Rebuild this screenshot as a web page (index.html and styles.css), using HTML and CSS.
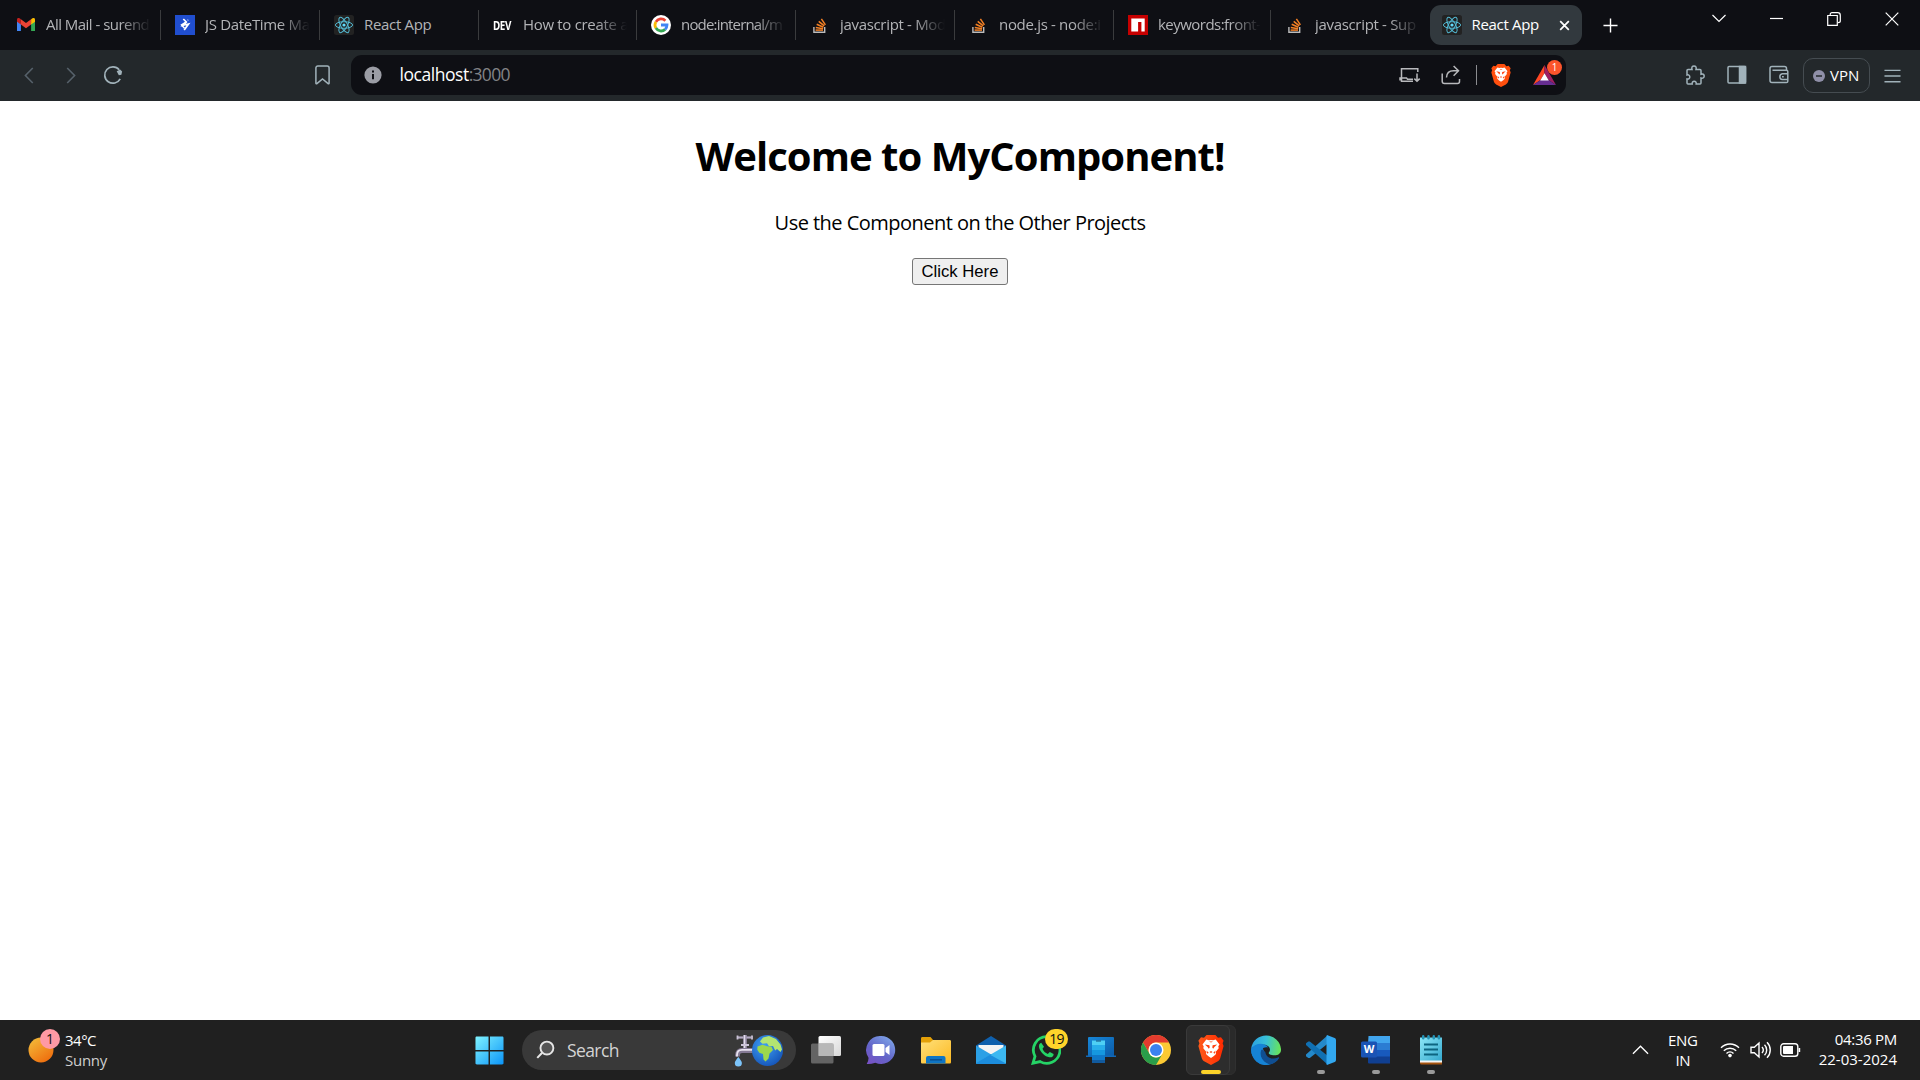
FILE: index.html
```html
<!DOCTYPE html>
<html lang="en">
<head>
<meta charset="utf-8">
<title>React App</title>
<link rel="stylesheet" href="styles.css">
</head>
<body>
<svg class="defs" aria-hidden="true">
  <defs>
    <linearGradient id="g-sun" x1="0.1" y1="0" x2="0.8" y2="1"><stop offset="0" stop-color="#f3bd3a"/><stop offset="1" stop-color="#ee6a0c"/></linearGradient>
    <linearGradient id="g-win" x1="0" y1="0" x2="1" y2="1"><stop offset="0" stop-color="#7ff3ff"/><stop offset="1" stop-color="#0b94f8"/></linearGradient>
    <linearGradient id="g-chat" x1="0" y1="1" x2="0.7" y2="0"><stop offset="0" stop-color="#7b4fc4"/><stop offset="0.5" stop-color="#6264c8"/><stop offset="1" stop-color="#7b9fe6"/></linearGradient>
    <linearGradient id="g-folder" x1="0" y1="0" x2="1" y2="1"><stop offset="0" stop-color="#ffe07a"/><stop offset="1" stop-color="#fcb922"/></linearGradient>
    <linearGradient id="g-edge" x1="0" y1="0.2" x2="1" y2="0.3"><stop offset="0" stop-color="#2b9fe0"/><stop offset="0.5" stop-color="#38c0d8"/><stop offset="1" stop-color="#67e35c"/></linearGradient>
    <linearGradient id="g-edge2" x1="0" y1="0" x2="0.8" y2="1"><stop offset="0" stop-color="#1b8ddd"/><stop offset="1" stop-color="#0c59a4"/></linearGradient>
    <linearGradient id="g-brave" x1="0" y1="0" x2="1" y2="0"><stop offset="0" stop-color="#ff5a1a"/><stop offset="1" stop-color="#ff2a00"/></linearGradient>
    <linearGradient id="g-note" x1="0" y1="0" x2="1" y2="1"><stop offset="0" stop-color="#8ce6f6"/><stop offset="1" stop-color="#35a9cf"/></linearGradient>
    <linearGradient id="g-phone" x1="0" y1="0" x2="1" y2="1"><stop offset="0" stop-color="#1787d8"/><stop offset="1" stop-color="#0b5ba8"/></linearGradient>
    <linearGradient id="g-paper" x1="0" y1="0" x2="1" y2="1"><stop offset="0" stop-color="#fff"/><stop offset="1" stop-color="#d8d8d8"/></linearGradient>
    <radialGradient id="g-globe" cx="0.4" cy="0.35" r="0.7"><stop offset="0" stop-color="#3fa0f4"/><stop offset="1" stop-color="#1554b8"/></radialGradient>

    <symbol id="i-react" viewBox="0 0 20 20">
      <rect width="20" height="20" rx="2.5" fill="#222"/>
      <circle cx="10" cy="10" r="1.6" fill="#61dafb"/>
      <g fill="none" stroke="#53b9d3" stroke-width="1">
        <ellipse cx="10" cy="10" rx="8.6" ry="3.3"/>
        <ellipse cx="10" cy="10" rx="8.6" ry="3.3" transform="rotate(60 10 10)"/>
        <ellipse cx="10" cy="10" rx="8.6" ry="3.3" transform="rotate(120 10 10)"/>
      </g>
    </symbol>
    <symbol id="i-stack" viewBox="0 0 20 20">
      <path d="M3.9 12v5.3h10.8V12" fill="none" stroke="#bcbbbb" stroke-width="1.4"/>
      <g stroke="#f48024" stroke-width="1.5">
        <path d="M5.6 15.1h7.4"/><path d="M5.8 12.4l7.3 1.3"/><path d="M6.7 9.3l6.7 3"/><path d="M8.7 6.3l5.6 4.6"/><path d="M11.4 3.9l4 6"/>
      </g>
    </symbol>
    <symbol id="i-brave" viewBox="0 0 26 30">
      <path d="M8.600 0h8.800l2.600 2.800 3-.5 2.600 3.400-1 2.600 1 2.700-3.400 12.200c-.5 1.700-1.500 2.500-2.800 3.400L13 30l-6.400-3.400c-1.300-.9-2.300-1.700-2.800-3.400L.4 11l1-2.700-1-2.600L3 2.300l3 .5z"/>
      <path fill="#fff" d="M8.300 4.500l2.600.7 2.100-.3 2.100.3 2.600-.7 3.800 5-1.200 1.700.4 2-3.100 3.800.4 1.900-2.100 2.200-2.900 2-2.900-2-2.100-2.200.4-1.900-3.100-3.800.4-2-1.200-1.700z"/>
      <g fill="#ff4010"><path d="M6.800 9.600l4.600.7.3 2.200-.9 1.300-1.200-1.700z"/><path d="M19.200 9.600l-4.600.7-.3 2.200.9 1.300 1.200-1.700z"/><path d="M13 15.900l1.500 1.200-1.500.9-1.500-.9z"/><path d="M8.500 15.400l2.200 2.400-1.400 1zM17.500 15.400l-2.200 2.400 1.400 1zM11 6.600h4l-2 .8z"/></g>
    </symbol>
  </defs>
</svg>

<div class="screen">
  <header class="tabstrip">
    <div class="tabs">
      <div class="tab">
        <svg class="favicon" viewBox="0 0 20 20"><path d="M1 5.500v10.400h3.900V8z" fill="#4285f4"/><path d="M19 5.500v10.400h-3.900V8z" fill="#34a853"/><path d="M4.900 4.200L10 8l5.100-3.800v5.300L10 13.300 4.900 9.500z" fill="#ea4335"/><path d="M1 4.600C1 2.500 3 2.300 4.900 4.200v5.300L1 6.700z" fill="#c5221f"/><path d="M19 4.600c0-2.100-2-2.300-3.900-.4v5.300L19 6.700z" fill="#fbbc04"/></svg>
        <span class="tab-title tight">All Mail - surend</span>
      </div>
      <div class="tab">
        <svg class="favicon" viewBox="0 0 20 20"><rect width="20" height="20" fill="#204ecf"/><path d="M8.300 4l3 3-3.300 3.300 5.500-1.300-4.300 6" fill="none" stroke="#fff" stroke-width="1.700"/><path d="M11.300 7L6.500 10l3 3.200" fill="none" stroke="#fff" stroke-width="1.500"/><path d="M12.300 4.500l1.200 1.200" stroke="#8ea6e8" stroke-width="1.200"/></svg>
        <span class="tab-title">JS DateTime Ma</span>
      </div>
      <div class="tab">
        <svg class="favicon"><use href="#i-react"/></svg>
        <span class="tab-title plain">React App</span>
      </div>
      <div class="tab tab-short">
        <span class="dev">DEV</span>
        <span class="tab-title">How to create a</span>
      </div>
      <div class="tab">
        <svg class="favicon" viewBox="0 0 20 20"><circle cx="10" cy="10" r="10" fill="#fff"/><g fill="none" stroke-width="2.800"><path d="M14.400 5.700A6 6 0 0 0 4.900 6.900" stroke="#ea4335"/><path d="M4.900 6.900a6 6 0 0 0 0 6.200" stroke="#fbbc05"/><path d="M4.900 13.100a6 6 0 0 0 9.200 1.300" stroke="#34a853"/><path d="M14.100 14.400A6 6 0 0 0 16 10h-6" stroke="#4285f4"/></g></svg>
        <span class="tab-title tighter">node:internal/m</span>
      </div>
      <div class="tab">
        <svg class="favicon"><use href="#i-stack"/></svg>
        <span class="tab-title">javascript - Mod</span>
      </div>
      <div class="tab">
        <svg class="favicon"><use href="#i-stack"/></svg>
        <span class="tab-title">node.js - node:i</span>
      </div>
      <div class="tab tab-narrow">
        <svg class="favicon" viewBox="0 0 20 20"><rect width="20" height="20" fill="#c60000"/><path d="M3.300 3.400h13.400v13.200h-3.300V7h-3.300v9.600H3.300z" fill="#fff"/></svg>
        <span class="tab-title tight">keywords:front-</span>
      </div>
      <div class="tab tab-last">
        <svg class="favicon"><use href="#i-stack"/></svg>
        <span class="tab-title">javascript - Sup</span>
      </div>
      <div class="tab-active">
        <svg class="favicon"><use href="#i-react"/></svg>
        <span class="tab-name">React App</span>
        <svg class="tab-close" viewBox="0 0 12 12"><path d="M1.300 1.300l9.400 9.400M10.700 1.300l-9.400 9.400"/></svg>
      </div>
      <svg class="new-tab" viewBox="0 0 16 16"><path d="M8 .5v15M.5 8h15"/></svg>
    </div>
    <div class="window-controls">
      <svg viewBox="0 0 14 14"><path d="M.5 3l6.500 6.500L13.500 3"/></svg>
      <svg viewBox="0 0 14 14"><path d="M0 6.500h13"/></svg>
      <svg viewBox="0 0 14 14"><path d="M.7 3.500h9.600v9.800H.7zM3.200 3.300V2.500c0-1 .8-1.800 1.800-1.800h5.600c1.500 0 2.700 1.200 2.700 2.700v5.600c0 1-.8 1.600-2.300 1.600"/></svg>
      <svg viewBox="0 0 14 14"><path d="M.7.700l12.600 12.600M13.300.7L.7 13.300"/></svg>
    </div>
  </header>

  <nav class="toolbar">
    <div class="nav-left">
      <svg class="nav-arrow" viewBox="0 0 10 18"><path d="M9 1L1.200 9 9 17"/></svg>
      <svg class="nav-arrow" viewBox="0 0 10 18"><path d="M1 1l7.800 8L1 17"/></svg>
      <svg class="nav-reload" viewBox="0 0 20 20"><path d="M16.200 4.700A8.200 8.200 0 1 0 17.200 13.800" fill="none" stroke="#a1b2ba" stroke-width="1.700"/><path d="M13.700 6.200l3.400-1.700 2 2.100-.7 3.200-2.600.5z" fill="#a1b2ba"/></svg>
      <svg class="nav-bookmark" viewBox="0 0 15 20"><path d="M.9 3A2 2 0 0 1 2.900 1h9.200a2 2 0 0 1 2 2v15.200c0 .6-.6.8-1 .4L7.500 14l-5.600 4.600c-.4.4-1 .2-1-.4z"/></svg>
    </div>
    <div class="address">
      <svg class="info" viewBox="0 0 18 18"><circle cx="9" cy="9" r="8.600" fill="#9b9da5"/><path d="M9 8v5.200M9 4.500v2" stroke="#0e0f14" stroke-width="2"/></svg>
      <span class="url"><span class="host">localhost</span><span class="port">:3000</span></span>
      <div class="address-icons">
        <svg class="ic-install" viewBox="0 0 22 16"><path d="M18.800 5V1.800H2.500v12.400H14M1 13.500v-2.600h6.500l1 1.400H14M18 6.500v7.500M15.300 11.600l2.700 2.700 2.700-2.700"/></svg>
        <svg class="ic-share" viewBox="0 0 20 20"><path d="M1.200 8.500v7.700c0 1.500 1 2.300 2.300 2.300h13c1.200 0 2-.8 2-2V14M5.500 12.500c.2-4.300 3-6.700 7-6.700h4.800M12.600 1l4.900 4.800-4.900 4.900"/></svg>
        <span class="divider"></span>
        <svg class="ic-brave" fill="#ff4f0e"><use href="#i-brave"/></svg>
        <div class="rewards">
          <svg class="ic-bat" viewBox="0 0 23 20"><path d="M11.500 0L0 20l7.500-5 4-6.800z" fill="#ff4724"/><path d="M11.500 0L23 20l-7.500-5-4-6.800z" fill="#9e1f63"/><path d="M0 20h23l-7.500-5h-8z" fill="#662d91"/><path d="M11.500 8.200L7.200 15.400h8.600z" fill="#fff"/></svg>
          <span class="rewards-badge">1</span>
        </div>
      </div>
    </div>
    <div class="nav-right">
      <svg class="ic-20" viewBox="0 0 20 20"><path d="M2 5.500a1 1 0 0 1 1-1h4c-.7-2 .3-3.600 2-3.600s2.700 1.600 2 3.600h4a1 1 0 0 1 1 1v3.700c1.700-.7 3.200.2 3.200 1.900s-1.500 2.600-3.200 1.900V18a1 1 0 0 1-1 1h-3.800c.3-1.700-.6-2.800-2-2.800s-2.300 1.100-2 2.800H3a1 1 0 0 1-1-1v-4c1.700.3 2.800-.5 2.800-2s-1.100-2.500-2.800-2z"/></svg>
      <svg class="ic-20" viewBox="0 0 20 20"><rect x="1" y="1.500" width="17.500" height="16.500" rx="1"/><path d="M12.500 1.500h6V18h-6z" fill="#a1b2ba"/></svg>
      <svg class="ic-20" viewBox="0 0 20 20"><path d="M17.500 6V3.600c0-1.100-.9-2-2-2H3c-1.200 0-2 .8-2 2v12c0 1.200.8 2 2 2h14.500c.8 0 1.300-.5 1.300-1.300V6.500c0-.8-.5-1.300-1.300-1.300H3.500M18.500 8.700h-5.200a3 3 0 0 0 0 5.900h5.200M13 11.700h1.800"/></svg>
      <div class="vpn"><svg class="vpn-dot" viewBox="0 0 12 12"><circle cx="6" cy="6" r="6" fill="#8f8fa8"/><path d="M3 6h6" stroke="#23282b" stroke-width="1.500"/></svg><span>VPN</span></div>
      <svg class="ic-menu" viewBox="0 0 18 14"><path d="M.5 1h17M.5 7h17M.5 13h17"/></svg>
    </div>
  </nav>

  <main class="page">
    <h1>Welcome to MyComponent!</h1>
    <p>Use the Component on the Other Projects</p>
    <button type="button">Click Here</button>
  </main>

  <footer class="taskbar">
    <div class="weather">
      <div class="sun">
        <svg viewBox="0 0 26 26"><circle cx="13" cy="13" r="12.500" fill="url(#g-sun)"/></svg>
        <span class="sun-badge">1</span>
      </div>
      <div class="two-line"><span class="temp">34°C</span><span class="dim">Sunny</span></div>
    </div>

    <div class="dock">
      <svg class="start" viewBox="0 0 30 30"><path fill="url(#g-win)" d="M2 .5h12v14H.5V2C.5 1 1 .5 2 .5zM15.500.5H28c1 0 1.500.5 1.500 1.500v12.500h-14zM.5 16H14v13.500H2c-1 0-1.500-.5-1.500-1.500zM15.500 16h14v12c0 1-.5 1.500-1.500 1.500H15.500z"/></svg>
      <div class="search">
        <svg class="magnifier" viewBox="0 0 20 20"><circle cx="11.500" cy="8" r="6.800" fill="#555" stroke="#e6e6e6" stroke-width="2"/><path d="M6.500 13L1.300 18.300" stroke="#e6e6e6" stroke-width="2.200"/></svg>
        <span class="search-label">Search</span>
        <svg class="highlight" viewBox="0 0 50 34">
          <path d="M5 4.500h13" fill="none" stroke="#b4aac2" stroke-width="2.200"/>
          <path d="M12 2v14" stroke="#9a8fa8" stroke-width="3.600"/><path d="M11.500 2v14" stroke="#e4deec" stroke-width="1.400"/>
          <path d="M22 17.500H9q-4.500 0-4.500 4.500v1.500" fill="none" stroke="#857a94" stroke-width="4.800"/>
          <path d="M22 16.800H9q-5 0-5 5.200v1.500" fill="none" stroke="#e9e4f0" stroke-width="1.800"/>
          <path d="M4.500 2.500v4M19 2.500v4M8 12h8" stroke="#cbc3d6" stroke-width="1.800"/>
          <path d="M5.300 24c2 2.600 3.600 4.600 3.600 6a3.500 3.500 0 0 1-7.100 0c0-1.400 1.600-3.400 3.500-6z" fill="#7cc4fa"/>
          <circle cx="34.500" cy="17.500" r="15.500" fill="url(#g-globe)"/>
          <path d="M24.500 13.500l5-1.800 4.500 1.600 4.500.5 1.500 3.200-3.500 3.500-1 5-3 3-2-2-.5-5.500-3.700-1.300-2-3z" fill="#9cd84b"/>
          <path d="M27 8.500l3-4 6-1.500 7 3 4.500 5.500 1.500 5-1.500 2.500-3.500-3-1.800 1.500-2.200-4.500-4 .2-2-3-4.500.5z" fill="#b3e571"/>
        </svg>
      </div>
      <div class="apps">
        <div class="app"><svg viewBox="0 0 30 30"><rect x="7.500" y="1" width="22.500" height="20" rx="1.500" fill="url(#g-paper)"/><rect y="8.500" width="22.500" height="20" rx="1.500" fill="#777" fill-opacity=".78"/><path d="M7.500 8.500h15V21h-15z" fill="#b8b8b8"/></svg></div>
        <div class="app"><svg viewBox="0 0 30 30"><path d="M15 1A14 14 0 1 1 9.300 27.700Q4.500 29.500.700 29q2-3 1.800-6.300A14 14 0 0 1 15 1z" fill="url(#g-chat)"/><rect x="6.500" y="9" width="12" height="12" rx="1.500" fill="#fff"/><path d="M19.500 13l4-3v10l-4-3z" fill="#fff"/></svg></div>
        <div class="app"><svg viewBox="0 0 30 30"><path d="M0 3.500C0 2.500.5 2 1.500 2h8l3 3.500v4H0z" fill="#e3a008"/><path d="M0 7.500h9l3-2.500h16.500c1 0 1.500.5 1.500 1.500V27c0 1-.5 1.500-1.500 1.500h-27C.5 28.500 0 28 0 27z" fill="url(#g-folder)"/><path d="M5 28.500V23q0-2 2-2h15.500q2 0 2 2v5.500z" fill="#0f75c4"/><path d="M9 24.800h12" stroke="#0a4f93" stroke-width="1.500"/></svg></div>
        <div class="app"><svg viewBox="0 0 30 30"><path d="M0 10.500L15 1l15 9.500V13H0z" fill="#0f60ad"/><path d="M2.500 10h25v9h-25z" fill="#f4f4f4"/><path d="M0 10.500L16 20v9H1.500C.5 29 0 28.500 0 27.500z" fill="#2ba0e6"/><path d="M30 10.500L13 20.500 0 28l1.500 1h27c1 0 1.500-.5 1.500-1.500z" fill="#3cb8f1"/><path d="M14 19.800L30 28.500 28.500 29h-27L0 28z" fill="#1c8ddd"/></svg></div>
        <div class="app"><svg viewBox="0 0 30 30"><path d="M15.500 1.700a13.300 13.300 0 1 1-6.300 24.900L2 28.200l2-6.900A13.300 13.300 0 0 1 15.500 1.700z" fill="none" stroke="#25d366" stroke-width="2.800"/><path d="M10.200 7.800c-1.800.5-2.800 2.700-2 5.200 1.500 4.500 5.700 8.500 10 9.300 2.600.4 4.500-1 4.400-3.300l-3.800-2-2 2c-2.500-1-4.300-2.800-5.300-5.200l1.500-2z" fill="#25d366"/></svg><span class="count">19</span></div>
        <div class="app"><svg viewBox="0 0 30 30"><path d="M3 2h24q1 0 1 1v18H2V3q0-1 1-1z" fill="url(#g-phone)"/><path d="M0 20.500h30V22H0z" fill="#1168b8"/><rect x="6" y="5" width="13" height="23" rx="1.200" fill="#0f78c8"/><path d="M6 5.500h13V10H6z" fill="#4ed0f4"/><path d="M6 10h13v5H6z" fill="#27aeea"/><path d="M6 15h13v5H6z" fill="#1598e0"/><path d="M6 25h13v3H6z" fill="#115a9e"/><path d="M10 6h5" stroke="#124f7c"/></svg></div>
        <div class="app"><svg viewBox="0 0 30 30"><circle cx="15" cy="15" r="15" fill="#fcc934"/><path d="M2 7.500A15 15 0 0 1 28 7.500H15a7.500 7.500 0 0 0-6.500 11.200z" fill="#e33b2e"/><path d="M2 7.500A15 15 0 0 0 15 30l6.500-11.200a7.500 7.500 0 0 1-13 0z" fill="#2a9d4a"/><circle cx="15" cy="15" r="7.500" fill="#fff"/><circle cx="15" cy="15" r="6" fill="#3b82ef"/></svg></div>
        <div class="app app-active"><span class="stack"></span><span class="tile"></span><svg class="brave-large" fill="url(#g-brave)"><use href="#i-brave"/></svg><span class="run run-active"></span></div>
        <div class="app"><svg viewBox="0 0 30 30"><path d="M.3 13.500A15 15 0 0 0 19 29.500c4-1 7.200-3.500 9-6.500-6 3-13.500.5-14.500-5.500L10 9z" fill="url(#g-edge2)"/><path d="M10.500 14c-3 5 0 13.500 8.500 15.500 4-1 7.200-3.500 9-6.500.3-.6-.4-.8-1-.5-5.500 2.500-12 .5-12.700-5.500z" fill="#104e91"/><path d="M.2 13.500A15 15 0 0 1 30 14c.3 4-2.500 6.300-6.500 6.300-3.500 0-5.800-1-5.800-2.200 0-1 1.300-1.300 1.300-3.600 0-2.300-2.500-4.800-6-4.800-5.500 0-9.500 1.500-12.800 3.800z" fill="url(#g-edge)"/><path d="M.2 13.500c4-5.500 13-6.500 17-1-4.500-1.500-7.700 2-7.700 6 0 5 4 9.500 9.500 11A15 15 0 0 1 .2 13.500z" fill="#1683d5"/></svg></div>
        <div class="app"><svg viewBox="0 0 30 30"><path d="M22 0L0 19.500v1.700l2.300 1.900h1.500L22.500 8z" fill="#2489ca"/><path d="M0 10v-1.700L2.300 6.400h1.500L22.500 21.500 22 30z" fill="#1070b3"/><path d="M21.500.2L28.700 3q1.300.6 1.300 2v20q0 1.400-1.300 2l-7.200 2.800c-1 .2-1-.5-1-1V1.200c0-.6.200-1.200 1-1z" fill="#32a8f0"/></svg><span class="run"></span></div>
        <div class="app"><svg viewBox="0 0 30 30"><path d="M7.500 1H29v7.500H7z" fill="#41a5ee"/><path d="M7 8h22v7H7z" fill="#2b7cd3"/><path d="M7 15h22v7H7z" fill="#185abd"/><path d="M7 21.500h22v7H8q-1 0-1-1z" fill="#103f91"/><rect y="6.500" width="16" height="16" rx="1.500" fill="#1a54b5"/></svg><span class="word-w">W</span><span class="run"></span></div>
        <div class="app"><svg viewBox="0 0 30 30"><path d="M4 26.500h22v3H5.500Q4 29.500 4 28z" fill="#a6540f"/><path d="M4 25h22v2.500H4z" fill="#f4f4f4"/><path d="M4 2.500h22v23H4z" fill="url(#g-note)"/><path d="M8 9.500h14M8 14.500h14M8 19.500h14" stroke="#0d6480" stroke-width="1.800"/><g fill="#2394b7"><rect x="6" width="2.400" height="4.500" rx="1.200"/><rect x="11.300" width="2.400" height="4.500" rx="1.200"/><rect x="16.600" width="2.400" height="4.500" rx="1.200"/><rect x="21.700" width="2.400" height="4.500" rx="1.200"/></g></svg><span class="run"></span></div>
      </div>
    </div>

    <div class="tray">
      <svg class="tray-up" viewBox="0 0 18 10"><path d="M1 9l8-8 8 8"/></svg>
      <div class="two-line lang"><span>ENG</span><span>IN</span></div>
      <svg class="tray-wifi" viewBox="0 0 20 16"><path d="M1 5.800a12.700 12.700 0 0 1 18 0M3.800 8.800a8.800 8.800 0 0 1 12.400 0M6.500 11.400a5 5 0 0 1 7 0"/><circle cx="10" cy="13.600" r="1.800" fill="#fff" stroke="none"/></svg>
      <svg class="tray-sound" viewBox="0 0 21 18"><path d="M1 6.300h3.300L9 2v14l-4.700-4.200H1zM12 6a4.500 4.500 0 0 1 0 6M14.500 3.700a7.500 7.500 0 0 1 0 10.600M17 1.200a11 11 0 0 1 0 15.600"/></svg>
      <svg class="tray-battery" viewBox="0 0 21 14"><rect x=".8" y=".8" width="17" height="12.400" rx="2.800"/><path d="M3 4q0-1 1-1h9v8H4q-1 0-1-1z" fill="#fff" stroke="none"/><path d="M18.600 5h1.600v4h-1.600z" fill="#fff" stroke="none"/></svg>
      <div class="two-line clock"><span class="time">04:36 PM</span><span>22-03-2024</span></div>
    </div>
  </footer>
</div>
</body>
</html>
```
FILE: styles.css
```css
* { box-sizing: border-box; }
body {
  margin: 0;
  background: #fff;
  font-family: "Open Sans", "Noto Sans", sans-serif;
  font-size: 15px;
  line-height: 20px;
}
svg { display: block; flex: none; }
.defs { position: absolute; width: 0; height: 0; }
.screen { display: flex; flex-direction: column; width: 1920px; height: 1080px; overflow: hidden; }

/* Tab strip */
.tabstrip { display: flex; justify-content: space-between; height: 50px; background: #0e0f14; }
.tabs { display: flex; align-items: center; padding-left: 2px; }
.tab {
  display: flex;
  flex: none;
  align-items: center;
  gap: 10px;
  width: 159px;
  height: 30px;
  padding: 0 8px 0 14px;
  border-right: 1px solid #3a3b3d;
  color: #b3b4b7;
}
.tab-short { width: 158px; }
.tab-narrow { width: 157px; }
.tab-last { width: 158.500px; border-color: transparent; }
.favicon { width: 20px; height: 20px; }
.tab-title {
  flex: 1;
  min-width: 0;
  padding-bottom: 2px;
  overflow: hidden;
  white-space: nowrap;
  letter-spacing: -0.32px;
  -webkit-mask-image: linear-gradient(to right, #000 70%, transparent 99%);
  mask-image: linear-gradient(to right, #000 70%, transparent 99%);
}
.plain { -webkit-mask-image: none; mask-image: none; }
.tight { letter-spacing: -0.53px; }
.tighter { letter-spacing: -0.82px; }
.dev {
  width: 20px;
  color: #fff;
  font: 700 13px/20px "Noto Sans", sans-serif;
  letter-spacing: -0.5px;
  transform: scaleX(0.76);
  transform-origin: left;
}
.tab-active {
  display: flex;
  align-items: center;
  width: 152.500px;
  height: 40px;
  padding: 0 12px;
  border-radius: 11px;
  background: #32393e;
  color: #fff;
}
.tab-name { flex: 1; padding: 0 0 2px 10px; letter-spacing: -0.32px; }
.tab-close { width: 11px; height: 11px; fill: none; stroke: #fff; stroke-width: 1.9; }
.new-tab { width: 15px; height: 15px; margin-left: 21px; fill: none; stroke: #fff; stroke-width: 1.5; }
.window-controls { display: flex; gap: 43.5px; padding: 12px 21.5px 0 0; }
.window-controls svg { width: 14px; height: 14px; fill: none; stroke: #fff; stroke-width: 1.2; }

/* Toolbar */
.toolbar { display: flex; align-items: center; height: 51px; padding-bottom: 1px; background: #23282b; }
.nav-left { display: flex; align-items: center; width: 351px; padding-left: 24px; }
.nav-left svg, .nav-right svg { fill: none; stroke: #a1b2ba; stroke-width: 1.5; }
.nav-left .nav-arrow { width: 10px; height: 17px; margin-right: 32px; stroke: #56616a; stroke-width: 1.7; }
.nav-left .nav-reload { width: 20px; height: 20px; margin-left: -5px; stroke: none; }
.nav-bookmark { width: 15px; height: 20px; margin-left: 192px; }
.address { display: flex; align-items: center; width: 1215px; height: 40px; padding: 0 10px 0 13px; border-radius: 11px; background: #0e0f14; }
.info { width: 18px; height: 18px; }
.url { flex: 1; padding: 0 0 2px 17.5px; font-size: 17.5px; line-height: 24px; color: #fff; }
.host { letter-spacing: -0.45px; }
.port { color: #828386; letter-spacing: -0.75px; }
.address-icons { display: flex; align-items: center; }
.ic-install, .ic-share { fill: none; stroke: #b8b9bc; stroke-width: 1.5; }
.ic-install { width: 22px; height: 16px; margin-right: 20px; }
.ic-share { width: 20px; height: 20px; margin-right: 15px; }
.divider { width: 1px; height: 20px; margin-right: 14px; background: #8b8c90; }
.ic-brave { width: 20px; height: 23px; margin-right: 22px; }
.rewards { position: relative; }
.ic-bat { width: 23px; height: 20px; }
.rewards-badge {
  position: absolute;
  top: -5px;
  right: -6px;
  width: 15px;
  height: 15px;
  border-radius: 50%;
  background: #fb542b;
  color: #fff;
  font-size: 10px;
  line-height: 15px;
  text-align: center;
}
.nav-right { display: flex; align-items: center; flex: 1; justify-content: flex-end; padding-right: 19px; }
.ic-20 { width: 20px; height: 20px; margin-right: 22px; }
.vpn {
  display: flex;
  align-items: center;
  gap: 5px;
  width: 67px;
  height: 35px;
  margin: 1px 14px 0 -8px;
  padding-left: 9px;
  border: 1px solid #454c51;
  border-radius: 10px;
  color: #fff;
}
.vpn span { padding-bottom: 1px; }
.nav-right .vpn-dot { width: 12px; height: 12px; stroke: none; }
.ic-menu { width: 17px; height: 14px; margin-top: 1px; }

/* Web page */
.page { display: flex; flex: 1; flex-direction: column; align-items: center; background: #fff; color: #000; }
.page h1 { margin: 28px 0 0; font-size: 40px; line-height: 53px; letter-spacing: -0.95px; }
.page p { margin: 27px 0 22px; font-size: 20px; line-height: 27px; letter-spacing: -0.53px; }
.page button {
  width: 96px;
  height: 27px;
  padding: 0;
  border: 1px solid #767676;
  border-radius: 3px;
  background: #efefef;
  color: #000;
  font: 16.67px "Liberation Sans", Arial, sans-serif;
}

/* Taskbar */
.taskbar { display: flex; align-items: center; height: 60px; background: #202020; color: #fff; }
.two-line { display: flex; flex-direction: column; }
.weather { display: flex; align-items: center; gap: 11px; width: 475px; padding-left: 28px; }
.sun { position: relative; }
.sun svg { width: 26px; height: 26px; }
.sun-badge {
  position: absolute;
  top: -8px;
  left: 12px;
  width: 20px;
  height: 20px;
  border-radius: 50%;
  background: #ff99a4;
  color: #111;
  font-size: 14px;
  line-height: 20px;
  text-align: center;
}
.temp { letter-spacing: -0.5px; }
.dim { color: #cfcfcf; letter-spacing: -0.25px; }
.dock { display: flex; align-items: center; }
.start { width: 29px; height: 29px; }
.search { display: flex; align-items: center; width: 274px; height: 40px; margin-left: 18px; padding: 0 13px 0 14px; border-radius: 20px; background: #393939; }
.magnifier { width: 19px; height: 20px; }
.search-label { flex: 1; padding-left: 12px; color: #d4d4d4; font-size: 17.5px; line-height: 24px; letter-spacing: -0.6px; }
.highlight { width: 50px; height: 34px; }
.apps { display: flex; margin-left: 2.5px; }
.app { position: relative; display: flex; align-items: center; justify-content: center; width: 55px; height: 60px; }
.app svg { width: 30px; height: 30px; }
.count {
  position: absolute;
  top: 9px;
  left: 26.500px;
  width: 23px;
  height: 20px;
  border-radius: 10px;
  background: #ffd42a;
  color: #111;
  font-size: 14px;
  letter-spacing: -0.8px;
  text-align: center;
}
.tile, .stack { position: absolute; top: 5px; left: 2.5px; width: 44px; height: 50px; border: 1px solid #3a3a3a; border-radius: 6px; background: #2d2d2d; }
.stack { left: 8.5px; border-color: #303030; background: #2a2a2a; }
.app-active .brave-large { position: relative; width: 26px; height: 30px; }
.run { position: absolute; bottom: 6px; left: 23.5px; width: 8px; height: 4px; border-radius: 2px; background: #9a9a9a; }
.run-active { left: 17.5px; width: 20px; background: #fcd329; }
.word-w { position: absolute; top: 21px; left: 12.5px; width: 16px; color: #fff; font-size: 11px; font-weight: 700; line-height: 16px; text-align: center; }
.tray { display: flex; align-items: center; flex: 1; justify-content: flex-end; padding-right: 23px; }
.tray svg { fill: none; stroke: #fff; stroke-width: 1.4; }
.tray-up { width: 17px; height: 10px; margin-right: 19px; }
.lang { width: 30px; margin-right: 22px; align-items: center; letter-spacing: -0.4px; }
.tray .tray-wifi { width: 20px; height: 16px; margin-right: 10px; }
.tray-sound { width: 21px; height: 18px; margin-right: 9px; }
.tray-battery { width: 21px; height: 14px; margin-right: 18px; }
.clock { align-items: flex-end; padding-bottom: 2px; }
.time { letter-spacing: -0.3px; }
```
